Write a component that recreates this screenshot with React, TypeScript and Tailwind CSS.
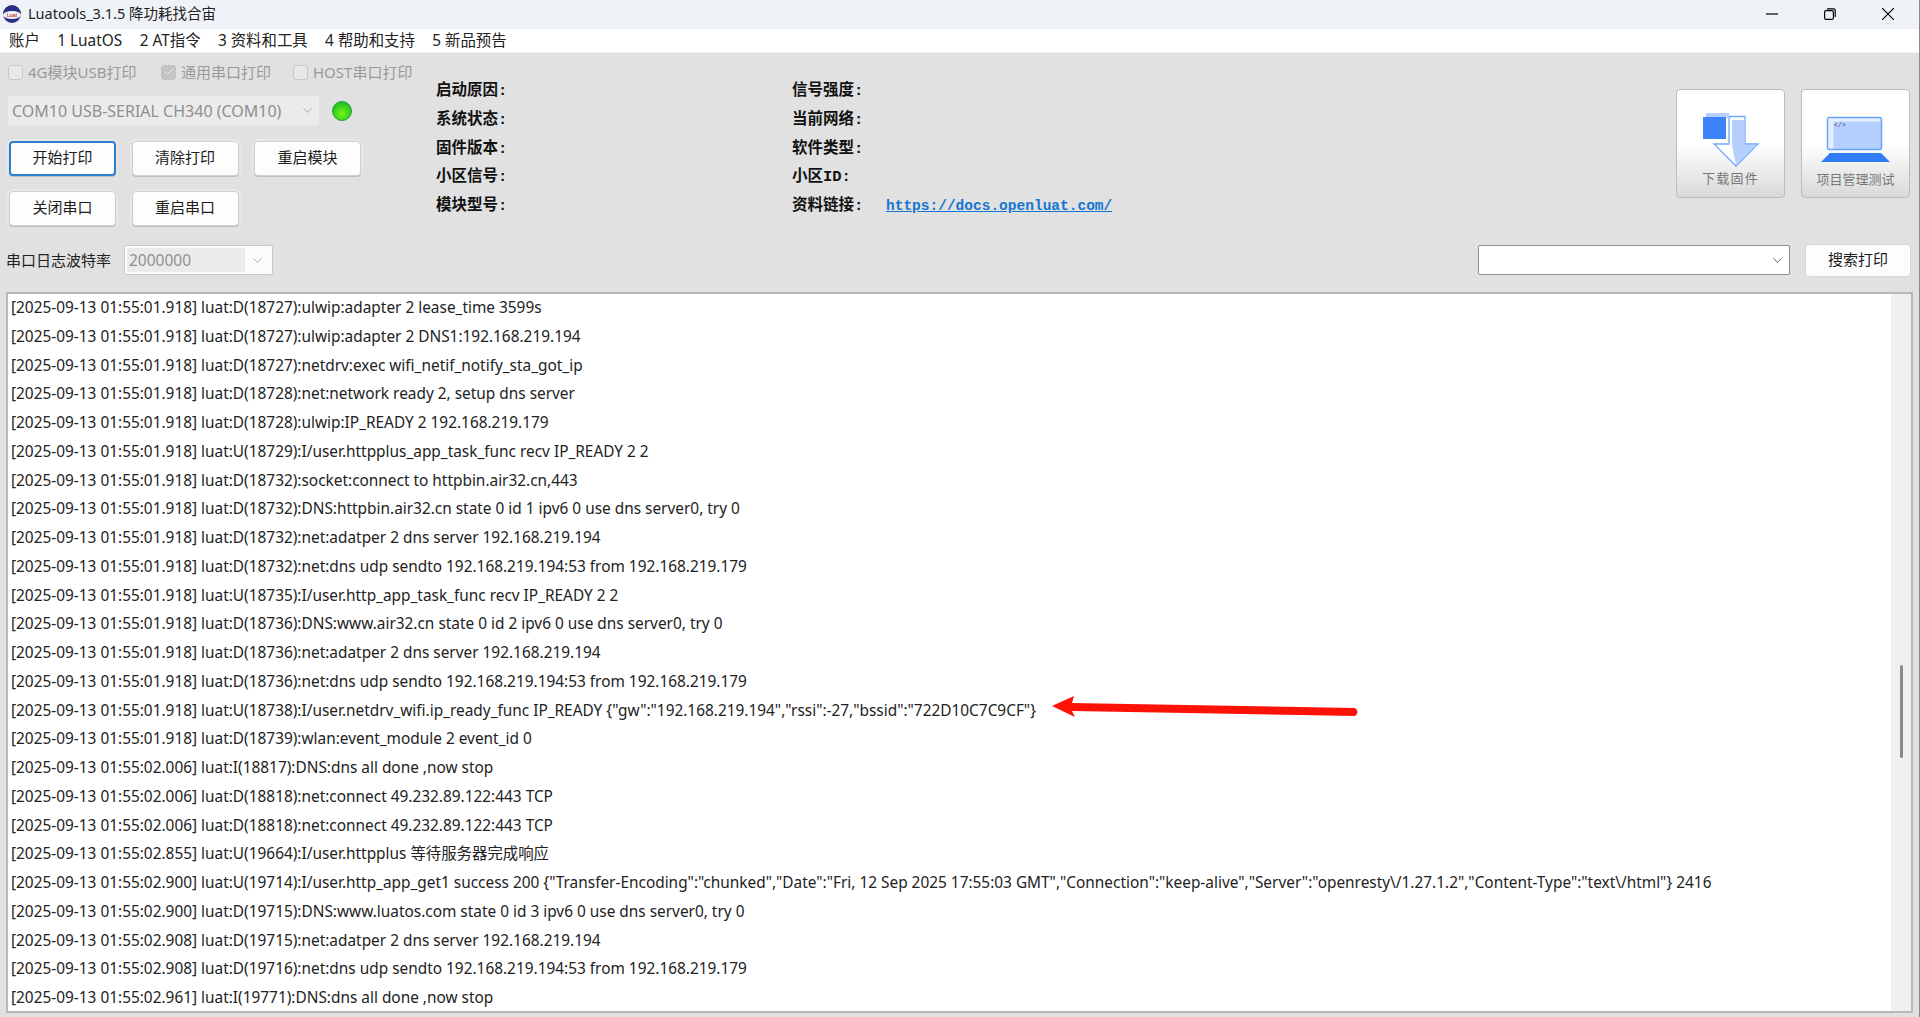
import { ChevronDown, Check } from 'lucide-react'

const MENU = ['账户', '1 LuatOS', '2 AT指令', '3 资料和工具', '4 帮助和支持', '5 新品预告']

const INFO_LEFT = ['启动原因:', '系统状态:', '固件版本:', '小区信号:', '模块型号:']
const INFO_RIGHT = ['信号强度:', '当前网络:', '软件类型:', '小区ID:', '资料链接:']

const LOG_LINES = [
  '[2025-09-13 01:55:01.918] luat:D(18727):ulwip:adapter 2 lease_time 3599s',
  '[2025-09-13 01:55:01.918] luat:D(18727):ulwip:adapter 2 DNS1:192.168.219.194',
  '[2025-09-13 01:55:01.918] luat:D(18727):netdrv:exec wifi_netif_notify_sta_got_ip',
  '[2025-09-13 01:55:01.918] luat:D(18728):net:network ready 2, setup dns server',
  '[2025-09-13 01:55:01.918] luat:D(18728):ulwip:IP_READY 2 192.168.219.179',
  '[2025-09-13 01:55:01.918] luat:U(18729):I/user.httpplus_app_task_func recv IP_READY 2 2',
  '[2025-09-13 01:55:01.918] luat:D(18732):socket:connect to httpbin.air32.cn,443',
  '[2025-09-13 01:55:01.918] luat:D(18732):DNS:httpbin.air32.cn state 0 id 1 ipv6 0 use dns server0, try 0',
  '[2025-09-13 01:55:01.918] luat:D(18732):net:adatper 2 dns server 192.168.219.194',
  '[2025-09-13 01:55:01.918] luat:D(18732):net:dns udp sendto 192.168.219.194:53 from 192.168.219.179',
  '[2025-09-13 01:55:01.918] luat:U(18735):I/user.http_app_task_func recv IP_READY 2 2',
  '[2025-09-13 01:55:01.918] luat:D(18736):DNS:www.air32.cn state 0 id 2 ipv6 0 use dns server0, try 0',
  '[2025-09-13 01:55:01.918] luat:D(18736):net:adatper 2 dns server 192.168.219.194',
  '[2025-09-13 01:55:01.918] luat:D(18736):net:dns udp sendto 192.168.219.194:53 from 192.168.219.179',
  '[2025-09-13 01:55:01.918] luat:U(18738):I/user.netdrv_wifi.ip_ready_func IP_READY {"gw":"192.168.219.194","rssi":-27,"bssid":"722D10C7C9CF"}',
  '[2025-09-13 01:55:01.918] luat:D(18739):wlan:event_module 2 event_id 0',
  '[2025-09-13 01:55:02.006] luat:I(18817):DNS:dns all done ,now stop',
  '[2025-09-13 01:55:02.006] luat:D(18818):net:connect 49.232.89.122:443 TCP',
  '[2025-09-13 01:55:02.006] luat:D(18818):net:connect 49.232.89.122:443 TCP',
  '[2025-09-13 01:55:02.855] luat:U(19664):I/user.httpplus 等待服务器完成响应',
  '[2025-09-13 01:55:02.900] luat:U(19714):I/user.http_app_get1 success 200 {"Transfer-Encoding":"chunked","Date":"Fri, 12 Sep 2025 17:55:03 GMT","Connection":"keep-alive","Server":"openresty\\/1.27.1.2","Content-Type":"text\\/html"} 2416',
  '[2025-09-13 01:55:02.900] luat:D(19715):DNS:www.luatos.com state 0 id 3 ipv6 0 use dns server0, try 0',
  '[2025-09-13 01:55:02.908] luat:D(19715):net:adatper 2 dns server 192.168.219.194',
  '[2025-09-13 01:55:02.908] luat:D(19716):net:dns udp sendto 192.168.219.194:53 from 192.168.219.179',
  '[2025-09-13 01:55:02.961] luat:I(19771):DNS:dns all done ,now stop',
]

function Btn({ label, focus }: { label: string; focus?: boolean }) {
  return (
    <button
      className={`w-[107px] h-[35px] pb-[2px] rounded-[4px] bg-[#fdfdfd] text-[15px] text-[#1c1c1c] shadow-[0_1px_1px_rgba(0,0,0,0.2),0_0_0_2px_#e8e8e8] ${
        focus ? 'border-2 border-[#2f7fd0]' : 'border border-[#d0d0d0]'
      }`}
    >
      {label}
    </button>
  )
}

function Checkbox({ label, checked, width }: { label: string; checked?: boolean; width: string }) {
  return (
    <div className={`flex items-center gap-[5px] text-[15px] text-[#9a9a9a] ${width}`}>
      <span
        className={`w-[15px] h-[15px] rounded-[3px] border flex items-center justify-center ${
          checked ? 'bg-[#c4c4c4] border-[#c4c4c4]' : 'bg-[#e8e8e8] border-[#c8c8c8]'
        }`}
      >
        {checked && <Check size={12} strokeWidth={2} className="text-[#ececec]" />}
      </span>
      {label}
    </div>
  )
}

function FirmwareIcon() {
  return (
    <svg width="58" height="54" viewBox="0 0 58 54">
      <path d="M27 3.500H43V31H56L34 53L12 31H27z" fill="#fff" stroke="#6fa8ff" strokeWidth="1.300" />
      <path d="M30 7H42.500V32H54.500L34 52L30 32z" fill="#b5d0ff" />
      <rect x="4" y="0" width="23" height="5" fill="#b5d0ff" />
      <rect x="1" y="4" width="23" height="22" fill="#3b82fb" />
    </svg>
  )
}

function LaptopIcon() {
  return (
    <svg width="70" height="47" viewBox="0 0 70 47">
      <rect x="6.500" y="1.500" width="54" height="32" rx="2" fill="#b5d0ff" stroke="#66a3ff" strokeWidth="1.500" />
      <rect x="7.500" y="2.500" width="5" height="30" fill="#e6eefc" />
      <rect x="7.500" y="2.500" width="52" height="3" fill="#e6eefc" />
      <text x="13" y="11" fontSize="6.500" fill="#3c4660" fontFamily="Liberation Mono, monospace">&lt;/&gt;</text>
      <path d="M9 37H60L69 46H0z" fill="#2f7df6" />
    </svg>
  )
}

export default function App() {
  return (
    <div className="relative w-[1920px] h-[1017px] flex flex-col overflow-hidden bg-[#e1e1e1] border-r border-[#8a8a8a] font-['Noto_Sans','Noto_Sans_CJK_SC',sans-serif] text-[#222]">
      {/* Title bar */}
      <div className="h-[29px] shrink-0 flex items-center bg-[#eff3f8] pl-[3px] pb-[2px]">
        <svg width="18" height="18" viewBox="0 0 18 18" className="shrink-0">
          <circle cx="9" cy="9" r="9" fill="#2b2f86" />
          <ellipse cx="9" cy="10" rx="9" ry="4" fill="#f4f4f4" />
          <text x="9" y="12" textAnchor="middle" fontSize="5" fontWeight="700" fill="#b8404e" fontFamily="Liberation Sans, sans-serif">Luat</text>
        </svg>
        <span className="ml-[7px] text-[14.5px] text-[#222]">Luatools_3.1.5 降功耗找合宙</span>
        <div className="ml-auto flex items-center gap-[46px] pr-[25px] text-black">
          <svg width="12" height="12" viewBox="0 0 12 12"><path d="M0 6h12" stroke="currentColor" strokeWidth="1.200" /></svg>
          <svg width="12" height="12" viewBox="0 0 12 12" fill="none" stroke="currentColor" strokeWidth="1.200"><rect x="0.600" y="2.600" width="8.800" height="8.800" rx="1.500" /><path d="M3 0.800h6.500A1.700 1.700 0 0 1 11.200 2.500V9" /></svg>
          <svg width="12" height="12" viewBox="0 0 12 12" stroke="currentColor" strokeWidth="1.200"><path d="M0 0l12 12M12 0L0 12" /></svg>
        </div>
      </div>

      {/* Menu */}
      <div className="h-[24px] shrink-0 flex items-center gap-[17.400px] bg-white pl-[9px] text-[15.400px] text-[#222] border-b border-[#f0f0f0]">
        {MENU.map((m) => (
          <span key={m}>{m}</span>
        ))}
      </div>

      {/* Top panel */}
      <div className="h-[192px] shrink-0 flex">
        <div className="w-[428px] shrink-0 pl-[8px] pt-[11px]">
          <div className="flex items-center h-[16px]">
            <Checkbox label="4G模块USB打印" width="w-[153px]" />
            <Checkbox label="通用串口打印" checked width="w-[132px]" />
            <Checkbox label="HOST串口打印" width="w-[130px]" />
          </div>
          <div className="flex items-center mt-[16px]">
            <div className="w-[311px] h-[29px] flex items-center justify-between bg-[#ebebeb] pl-[4px] pr-[4px] text-[16px] text-[#8f8f8f]">
              <span>COM10 USB-SERIAL CH340 (COM10)</span>
              <ChevronDown size={15} strokeWidth={1.5} className="text-[#a8a8a8]" />
            </div>
            <span className="ml-[13px] w-[20px] h-[20px] rounded-full bg-[radial-gradient(circle_at_50%_65%,#7df21c_0%,#3ed81a_45%,#13a82a_100%)] border border-[#1d9f3a]" />
          </div>
          <div className="flex gap-[15.500px] mt-[15.500px] pl-[1px]">
            <Btn label="开始打印" focus />
            <Btn label="清除打印" />
            <Btn label="重启模块" />
          </div>
          <div className="flex gap-[15.500px] mt-[15px] pl-[1px]">
            <Btn label="关闭串口" />
            <Btn label="重启串口" />
          </div>
        </div>

        <div className="w-[356px] shrink-0 pt-[24px] pl-[8px] font-['Liberation_Mono','Noto_Sans_CJK_SC',monospace] font-bold text-[15.500px] leading-[28.75px] text-[#111]">
          {INFO_LEFT.map((t) => (
            <div key={t}>{t}</div>
          ))}
        </div>

        <div className="pt-[24px] pl-[8px] font-['Liberation_Mono','Noto_Sans_CJK_SC',monospace] font-bold text-[15.500px] leading-[28.75px] text-[#111]">
          {INFO_RIGHT.map((t, i) =>
            i === 4 ? (
              <div key={t} className="flex">
                <span className="w-[94px]">{t}</span>
                <a className="text-[14.500px] text-[#1675d1] underline">https://docs.openluat.com/</a>
              </div>
            ) : (
              <div key={t}>{t}</div>
            ),
          )}
        </div>

        <div className="ml-auto flex gap-[16px] pt-[36px] pr-[9px]">
          <div className="w-[109px] h-[109px] rounded-[4px] border border-[#bcbcbc] bg-gradient-to-b from-white from-50% to-[#d9d9d9] flex flex-col items-center pt-[23px]">
            <FirmwareIcon />
            <span className="text-[13px] leading-[18px] tracking-[1.3px] text-[#777] mt-[2px]">下载固件</span>
          </div>
          <div className="w-[109px] h-[109px] rounded-[4px] border border-[#bcbcbc] bg-gradient-to-b from-white from-50% to-[#d9d9d9] flex flex-col items-center pt-[26px]">
            <LaptopIcon />
            <span className="text-[13px] leading-[18px] text-[#777] mt-[7px]">项目管理测试</span>
          </div>
        </div>
      </div>

      {/* Baud / search row */}
      <div className="h-[30px] shrink-0 flex items-center pl-[6px] pr-[8px]">
        <span className="w-[118px] text-[15px] text-[#222]">串口日志波特率</span>
        <div className="w-[149px] h-[30px] flex items-center justify-between bg-[#fcfcfc] border border-[#c8c8c8] rounded-[2px] p-[2px]">
          <span className="flex-1 h-full bg-[#ebebeb] text-[15.500px] text-[#8f8f8f] pl-[2px] leading-[24px]">2000000</span>
          <ChevronDown size={15} strokeWidth={1.5} className="mx-[5px] text-[#a0a0a0]" />
        </div>
        <div className="ml-auto w-[312px] h-[30px] flex items-center justify-end bg-white border border-[#8f8f8f] rounded-[2px] pr-[4px]">
          <ChevronDown size={15} strokeWidth={1.5} className="text-[#555]" />
        </div>
        <button className="ml-[15px] w-[106px] h-[33px] pb-[2px] rounded-[4px] bg-[#fdfdfd] border border-[#d8d8d8] text-[15px] text-[#1c1c1c]">搜索打印</button>
      </div>

      {/* Log */}
      <div className="relative flex-1 flex mt-[17px] mb-[4px] ml-[6px] mr-[6px] bg-white border-2 border-[#b8b8b8] overflow-hidden">
        <div className="flex-1 pl-[3px] text-[15.400px] leading-[28.75px] text-[#222] whitespace-nowrap overflow-hidden">
          {LOG_LINES.map((l, i) => (
            <div key={i}>{l}</div>
          ))}
        </div>
        <div className="w-[20px] shrink-0 bg-[#f0f0f0] flex justify-center">
          <div className="w-[3px] h-[93px] mt-[371px] bg-[#8a8a8a] rounded-full" />
        </div>
        <svg className="absolute left-[1044px] top-[400px]" width="312" height="26" viewBox="0 0 312 26">
          <path d="M0 12L22 2L20 9L303 14Q308 18 303 22L20 17L23 23Z" fill="#fe1208" />
        </svg>
      </div>
    </div>
  )
}
